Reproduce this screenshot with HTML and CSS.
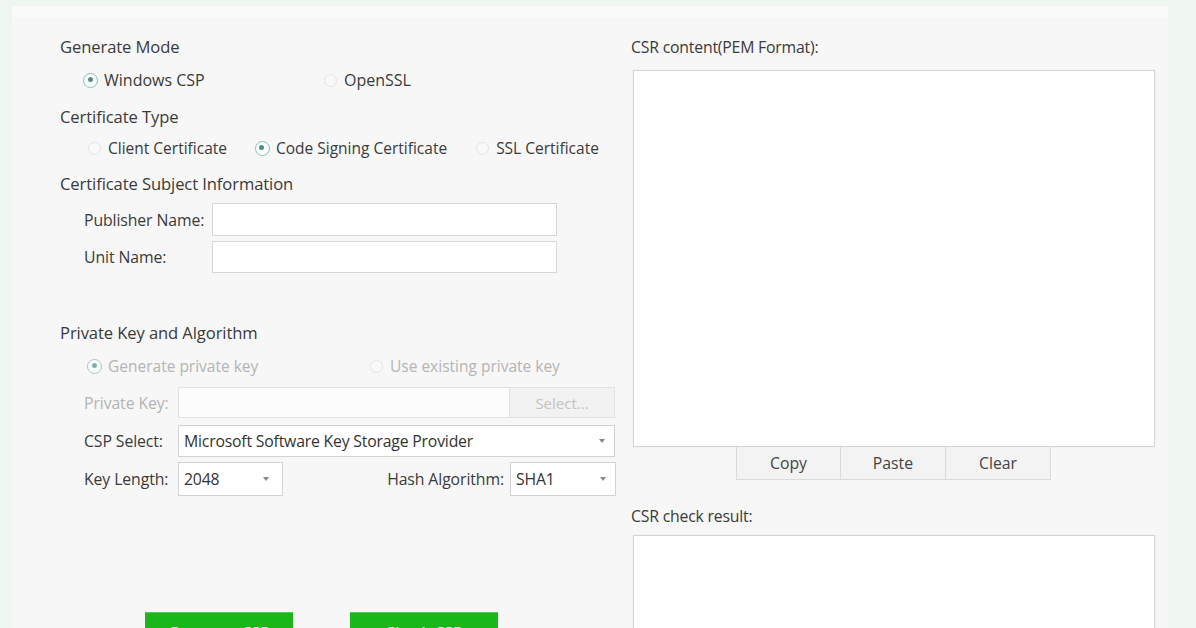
FILE: index.html
```html
<!DOCTYPE html>
<html>
<head>
<meta charset="utf-8">
<link rel="stylesheet" href="styles.css">
</head>
<body>
<div class="window">
  <div class="left">
    <div class="section-title t1">Generate Mode</div>
    <div class="radio-row r1">
      <label class="radio w237"><span class="dot on"></span>Windows CSP</label>
      <label class="radio"><span class="dot"></span>OpenSSL</label>
    </div>
    <div class="section-title t2">Certificate Type</div>
    <div class="radio-row r2">
      <label class="radio"><span class="dot"></span>Client Certificate</label>
      <label class="radio"><span class="dot on"></span>Code Signing Certificate</label>
      <label class="radio"><span class="dot"></span>SSL Certificate</label>
    </div>
    <div class="section-title t3">Certificate Subject Information</div>
    <div class="field-row f1">
      <span class="flabel wide">Publisher Name:</span>
      <div class="input subj"></div>
    </div>
    <div class="field-row f2">
      <span class="flabel wide">Unit Name:</span>
      <div class="input subj"></div>
    </div>
    <div class="section-title t4">Private Key and Algorithm</div>
    <div class="radio-row r3 disabled">
      <label class="radio w282"><span class="dot on"></span>Generate private key</label>
      <label class="radio"><span class="dot"></span>Use existing private key</label>
    </div>
    <div class="field-row f3 disabled">
      <span class="flabel">Private Key:</span>
      <div class="input pk"></div>
      <div class="btn-select">Select...</div>
    </div>
    <div class="field-row f4">
      <span class="flabel">CSP Select:</span>
      <div class="select csp"><span>Microsoft Software Key Storage Provider</span><svg class="arrow" width="6" height="4" viewBox="0 0 6 4"><path d="M0 0H6L3 4Z" fill="#888"/></svg></div>
    </div>
    <div class="field-row f5">
      <span class="flabel">Key Length:</span>
      <div class="select small kl"><span>2048</span><svg class="arrow" width="6" height="4" viewBox="0 0 6 4"><path d="M0 0H6L3 4Z" fill="#888"/></svg></div>
      <span class="flabel hash">Hash Algorithm:</span>
      <div class="select small"><span>SHA1</span><svg class="arrow" width="6" height="4" viewBox="0 0 6 4"><path d="M0 0H6L3 4Z" fill="#888"/></svg></div>
    </div>
    <div class="actions">
      <div class="green">Generate CSR</div>
      <div class="green">Check CSR</div>
    </div>
  </div>
  <div class="right">
    <div class="rlabel">CSR content(PEM Format):</div>
    <div class="textbox big"></div>
    <div class="tools">
      <div class="tbtn">Copy</div>
      <div class="tbtn">Paste</div>
      <div class="tbtn">Clear</div>
    </div>
    <div class="rlabel r2l">CSR check result:</div>
    <div class="textbox result"></div>
  </div>
</div>
</body>
</html>
```

FILE: styles.css
```css
* { box-sizing: border-box; }
html, body { margin: 0; height: 100%; overflow: hidden; }
body {
  background: #eef6ef;
  font-family: "Open Sans", "Noto Sans", sans-serif;
  font-size: 16px;
  color: #3a3a3a;
}
.window {
  margin: 6px 28px 0 12px;
  height: 700px;
  background: #f7f7f7;
  border-top: 12px solid #fafafb;
  display: flex;
  padding: 19px 13px 0 50px;
}
.left { width: 555px; display: flex; flex-direction: column; }
.right { width: 525px; margin-left: 15px; display: flex; flex-direction: column; }
.left > *, .right > * { flex: none; }

.section-title { line-height: 20px; height: 20px; font-size: 16.6px; letter-spacing: -0.1px; margin-left: -2px; }
.t2 { margin-top: 15px; }
.t3 { margin-top: 14px; }
.t4 { margin-top: 50px; }

.radio-row { display: flex; align-items: center; height: 24px; padding-left: 22px; gap: 29px; font-size: 15.5px; }
.r1 { margin-top: 11px; gap: 0; font-size: 16px; }
.r2 { margin-top: 9px; padding-left: 26px; }
.r3 { margin-top: 11px; gap: 0; padding-left: 26px; }
.radio { display: flex; align-items: center; white-space: nowrap; }
.w237 { width: 240px; }
.w282 { width: 282px; }
.dot {
  width: 13px; height: 13px; border-radius: 50%;
  border: 1px solid #e4e4e4; background: #f9f9f9;
  margin-right: 7px; position: relative; flex: none;
}
.dot.on {
  width: 15px; height: 15px; margin-left: -1px; margin-right: 6px;
  border: 1.5px solid #86bdb5; background: #fbfefd;
}
.dot.on::after {
  content: ""; position: absolute; left: 3.5px; top: 3.5px;
  width: 5px; height: 5px; border-radius: 50%; background: #4f8f88;
}
.disabled { color: #b4b4b4; }
.disabled .dot.on { border-color: #9cc9c3; }
.disabled .dot.on::after { background: #7fb0aa; }

.field-row { display: flex; align-items: center; padding-left: 22px; }
.f1 { margin-top: 9px; height: 33px; }
.f2 { margin-top: 5px; height: 32px; }
.f3 { margin-top: 9px; height: 31px; }
.f4 { margin-top: 7px; height: 32px; }
.f5 { margin-top: 5px; height: 34px; }
.flabel { width: 94px; white-space: nowrap; font-size: 15.8px; letter-spacing: -0.1px; }
.flabel.wide { width: 128px; }
.flabel.hash { width: auto; margin-left: auto; margin-right: 6px; }
.input {
  height: 100%; background: #fff; border: 1px solid #d6d6d6;
}
.subj { width: 345px; }
.pk { width: 332px; background: #fcfcfc; border-color: #e2e2e2; }
.btn-select {
  width: 105px; height: 100%; border: 1px solid #e2e2e2; border-left: none;
  background: #f2f2f2; display: flex; align-items: center; justify-content: center;
  color: #c2c2c2; font-size: 15px;
}
.select {
  height: 100%; background: #fff; border: 1px solid #d2d2d2;
  display: flex; align-items: center; padding: 0 9px 0 5px; font-size: 15.8px; letter-spacing: -0.2px; color: #333;
}
.select span { flex: 1; }
.csp { width: 437px; }
.small { width: 106px; }
.kl { width: 105px; padding-right: 13px; }
.arrow { flex: none; }

.actions { display: flex; gap: 57px; margin-top: 116px; padding-left: 83px; }
.green {
  width: 148px; height: 40px; background: #1ab71a; color: #fff;
  display: flex; justify-content: center;
  border-top: 1px solid #4fc94f; font-size: 16px; padding-top: 10px; line-height: 20px;
}

.rlabel { line-height: 20px; height: 20px; font-size: 15.8px; letter-spacing: -0.2px; }
.textbox {
  background: #fff; border: 1px solid #d4d4d4;
  box-shadow: 0 0 1px #e0e0e0; margin-left: 2px;
}
.big { margin-top: 13px; height: 377px; }
.tools { display: flex; padding-left: 105px; height: 33px; }
.tbtn {
  width: 105px; height: 33px; background: #f3f3f3;
  border: 1px solid #dadada; border-top: none;
  display: flex; align-items: center; justify-content: center; font-size: 15.8px; color: #444;
}
.tbtn + .tbtn { border-left: none; }
.r2l { margin-top: 26px; }
.result { margin-top: 9px; height: 200px; }
```
